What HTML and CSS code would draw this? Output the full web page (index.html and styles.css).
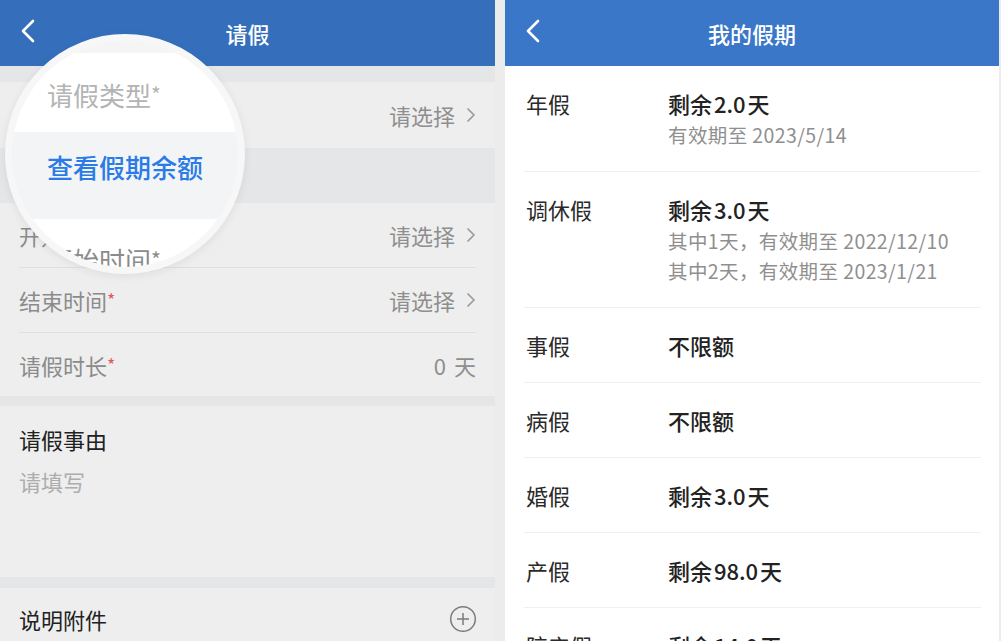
FILE: index.html
```html
<!DOCTYPE html>
<html lang="zh-CN">
<head>
  <meta charset="UTF-8">
  <meta name="viewport" content="width=device-width, initial-scale=1.0">
  <title>请假 - 我的假期</title>
  <link rel="stylesheet" href="styles.css">
</head>
<body>
  <div class="screens">
    <!-- 请假表单（带蒙层） -->
    <div class="phone phone-form">
      <div class="nav-bar nav-dim">
        <svg class="nav-back" width="16" height="24" viewBox="0 0 16 24"><path d="M13 2 L3 12 L13 22" fill="none" stroke="#fff" stroke-width="2.6" stroke-linecap="round" stroke-linejoin="round"/></svg>
        <h1>请假</h1>
        <span></span>
      </div>

      <div class="form-group form-type">
        <div class="form-row">
          <span class="form-label">请假类型<em>*</em></span>
          <span class="form-value">请选择<svg class="chevron" width="10" height="16" viewBox="0 0 10 16"><path d="M2 2 L8 8 L2 14" fill="none" stroke="#9a9a9a" stroke-width="1.7" stroke-linecap="round" stroke-linejoin="round"/></svg></span>
        </div>
      </div>

      <div class="form-group form-time">
        <div class="form-row">
          <span class="form-label">开始时间<em>*</em></span>
          <span class="form-value">请选择<svg class="chevron" width="10" height="16" viewBox="0 0 10 16"><path d="M2 2 L8 8 L2 14" fill="none" stroke="#9a9a9a" stroke-width="1.7" stroke-linecap="round" stroke-linejoin="round"/></svg></span>
        </div>
        <div class="form-row">
          <span class="form-label">结束时间<em>*</em></span>
          <span class="form-value">请选择<svg class="chevron" width="10" height="16" viewBox="0 0 10 16"><path d="M2 2 L8 8 L2 14" fill="none" stroke="#9a9a9a" stroke-width="1.7" stroke-linecap="round" stroke-linejoin="round"/></svg></span>
        </div>
        <div class="form-row">
          <span class="form-label">请假时长<em>*</em></span>
          <span class="form-value form-days">0 天</span>
        </div>
      </div>

      <div class="form-group form-reason">
        <div class="reason-title">请假事由</div>
        <div class="reason-placeholder">请填写</div>
      </div>

      <div class="form-group form-attach">
        <div class="form-row">
          <span class="attach-title">说明附件</span>
          <svg class="attach-add" width="28" height="28" viewBox="0 0 28 28"><circle cx="14" cy="14" r="12.3" fill="none" stroke="#7b7b7b" stroke-width="1.5"/><path d="M14 8 V20 M8 14 H20" stroke="#7b7b7b" stroke-width="1.5"/></svg>
        </div>
      </div>

      <!-- 放大镜 -->
      <div class="magnifier">
        <div class="zoom-row zoom-type">请假类型<em>*</em></div>
        <div class="zoom-row zoom-hint">查看假期余额</div>
        <div class="zoom-row zoom-start">开始时间<em>*</em></div>
      </div>
    </div>

    <!-- 我的假期 -->
    <div class="phone phone-list">
      <div class="nav-bar">
        <svg class="nav-back" width="16" height="24" viewBox="0 0 16 24"><path d="M13 2 L3 12 L13 22" fill="none" stroke="#fff" stroke-width="2.6" stroke-linecap="round" stroke-linejoin="round"/></svg>
        <h1>我的假期</h1>
        <span></span>
      </div>

      <div class="leave-list">
        <div class="leave-item has-sub">
          <div class="leave-name">年假</div>
          <div class="leave-info">
            <div class="leave-value">剩余 2.0 天</div>
            <div class="leave-sub">有效期至 2023/5/14</div>
          </div>
        </div>
        <div class="leave-item has-sub">
          <div class="leave-name">调休假</div>
          <div class="leave-info">
            <div class="leave-value">剩余 3.0 天</div>
            <div class="leave-sub">其中1天，有效期至 2022/12/10</div>
            <div class="leave-sub">其中2天，有效期至 2023/1/21</div>
          </div>
        </div>
        <div class="leave-item">
          <div class="leave-name">事假</div>
          <div class="leave-info"><div class="leave-value">不限额</div></div>
        </div>
        <div class="leave-item">
          <div class="leave-name">病假</div>
          <div class="leave-info"><div class="leave-value">不限额</div></div>
        </div>
        <div class="leave-item">
          <div class="leave-name">婚假</div>
          <div class="leave-info"><div class="leave-value">剩余 3.0 天</div></div>
        </div>
        <div class="leave-item">
          <div class="leave-name">产假</div>
          <div class="leave-info"><div class="leave-value">剩余 98.0 天</div></div>
        </div>
        <div class="leave-item">
          <div class="leave-name">陪产假</div>
          <div class="leave-info"><div class="leave-value">剩余 14.0 天</div></div>
        </div>
      </div>
    </div>
  </div>
</body>
</html>
```

FILE: styles.css
```css
* {
  margin: 0;
  padding: 0;
  box-sizing: border-box;
}

body {
  font-family: "Noto Sans CJK SC", "Noto Sans", sans-serif;
  background-color: #ececec;
  overflow: hidden;
}

.screens {
  display: flex;
  gap: 10px;
  height: 641px;
}

.phone {
  height: 100%;
  overflow: hidden;
}

/* 顶部导航 */
.nav-bar {
  display: grid;
  grid-template-columns: 1fr auto 1fr;
  align-items: center;
  height: 66px;
  background-color: #3b77c8;
  color: #fff;
}

.nav-bar h1 {
  font-size: 22px;
  font-weight: 500;
  line-height: 1;
}

.nav-back {
  margin-left: 20px;
  margin-top: -4px;
}

.nav-dim {
  background-color: #356fbc;
}

/* 左侧：请假表单 */
.phone-form {
  position: relative;
  width: 495px;
  background-color: #e5e6e8;
}

.form-group {
  background-color: #eeeeee;
}

.form-type {
  margin-top: 16px;
  height: 66px;
}

.form-time {
  margin-top: 55px;
}

.form-reason {
  margin-top: 10px;
  height: 171px;
  padding: 21px 19px 0;
}

.form-attach {
  margin-top: 11px;
  height: 60px;
}

.form-row {
  display: flex;
  align-items: center;
  justify-content: space-between;
  height: 65px;
  margin: 0 19px;
  font-size: 22px;
  border-bottom: 1px solid #e0e0e0;
}

.form-row:last-child {
  border-bottom: none;
}

.form-type .form-row {
  height: 66px;
}

.form-time .form-row:last-child {
  height: 63px;
}

.form-attach .form-row {
  height: 62px;
}

.form-label {
  color: #8b8b8b;
}

.form-label em {
  font-style: normal;
  color: #e45a5a;
  font-size: 18px;
  vertical-align: 3px;
}

.form-value {
  display: flex;
  align-items: center;
  gap: 11px;
  color: #8e8e8e;
}

.form-days {
  word-spacing: 3px;
}

.reason-title,
.attach-title {
  font-size: 22px;
  line-height: 24px;
  color: #212121;
}

.reason-placeholder {
  margin-top: 18px;
  font-size: 22px;
  line-height: 24px;
  color: #adadad;
}

.attach-add {
  margin-right: -1px;
}

/* 放大镜 */
.magnifier {
  position: absolute;
  left: 5px;
  top: 34px;
  width: 240px;
  height: 240px;
  border: 7px solid #f7f7f8;
  border-radius: 50%;
  overflow: hidden;
  background-color: #f5f5f6;
  padding-top: 12px;
  box-shadow: 0 2px 10px rgba(0, 0, 0, 0.07);
}

.zoom-row {
  font-size: 26px;
  line-height: 26px;
  padding-left: 35px;
  background-color: #fff;
  white-space: nowrap;
}

.zoom-row em {
  font-style: normal;
  font-size: 21px;
  vertical-align: 3px;
}

.zoom-type {
  height: 79px;
  padding-top: 28px;
  color: #b4b4b4;
}

.zoom-hint {
  height: 87px;
  padding-top: 22px;
  background-color: #f3f4f6;
  color: #2b7be6;
  font-weight: 500;
}

.zoom-start {
  height: 80px;
  padding-top: 27px;
  color: #8b8b8b;
}

/* 右侧：我的假期 */
.phone-list {
  width: 494px;
  background-color: #fff;
}

.leave-list {
  padding: 0 18px 0 19px;
}

.leave-item {
  display: flex;
  padding: 25px 0 25px;
  border-bottom: 1px solid #efefef;
}

.leave-item.has-sub {
  padding-bottom: 21px;
}

.leave-name {
  width: 144px;
  padding-left: 2px;
  font-size: 22px;
  line-height: 24px;
  color: #2a2a2a;
}

.leave-value {
  font-size: 22px;
  line-height: 24px;
  font-weight: 500;
  color: #222;
  word-spacing: -3px;
}

.leave-sub {
  font-size: 19.5px;
  line-height: 30px;
  letter-spacing: 0.4px;
  color: #8f8f8f;
}

.leave-value + .leave-sub {
  margin-top: 5px;
}
```
